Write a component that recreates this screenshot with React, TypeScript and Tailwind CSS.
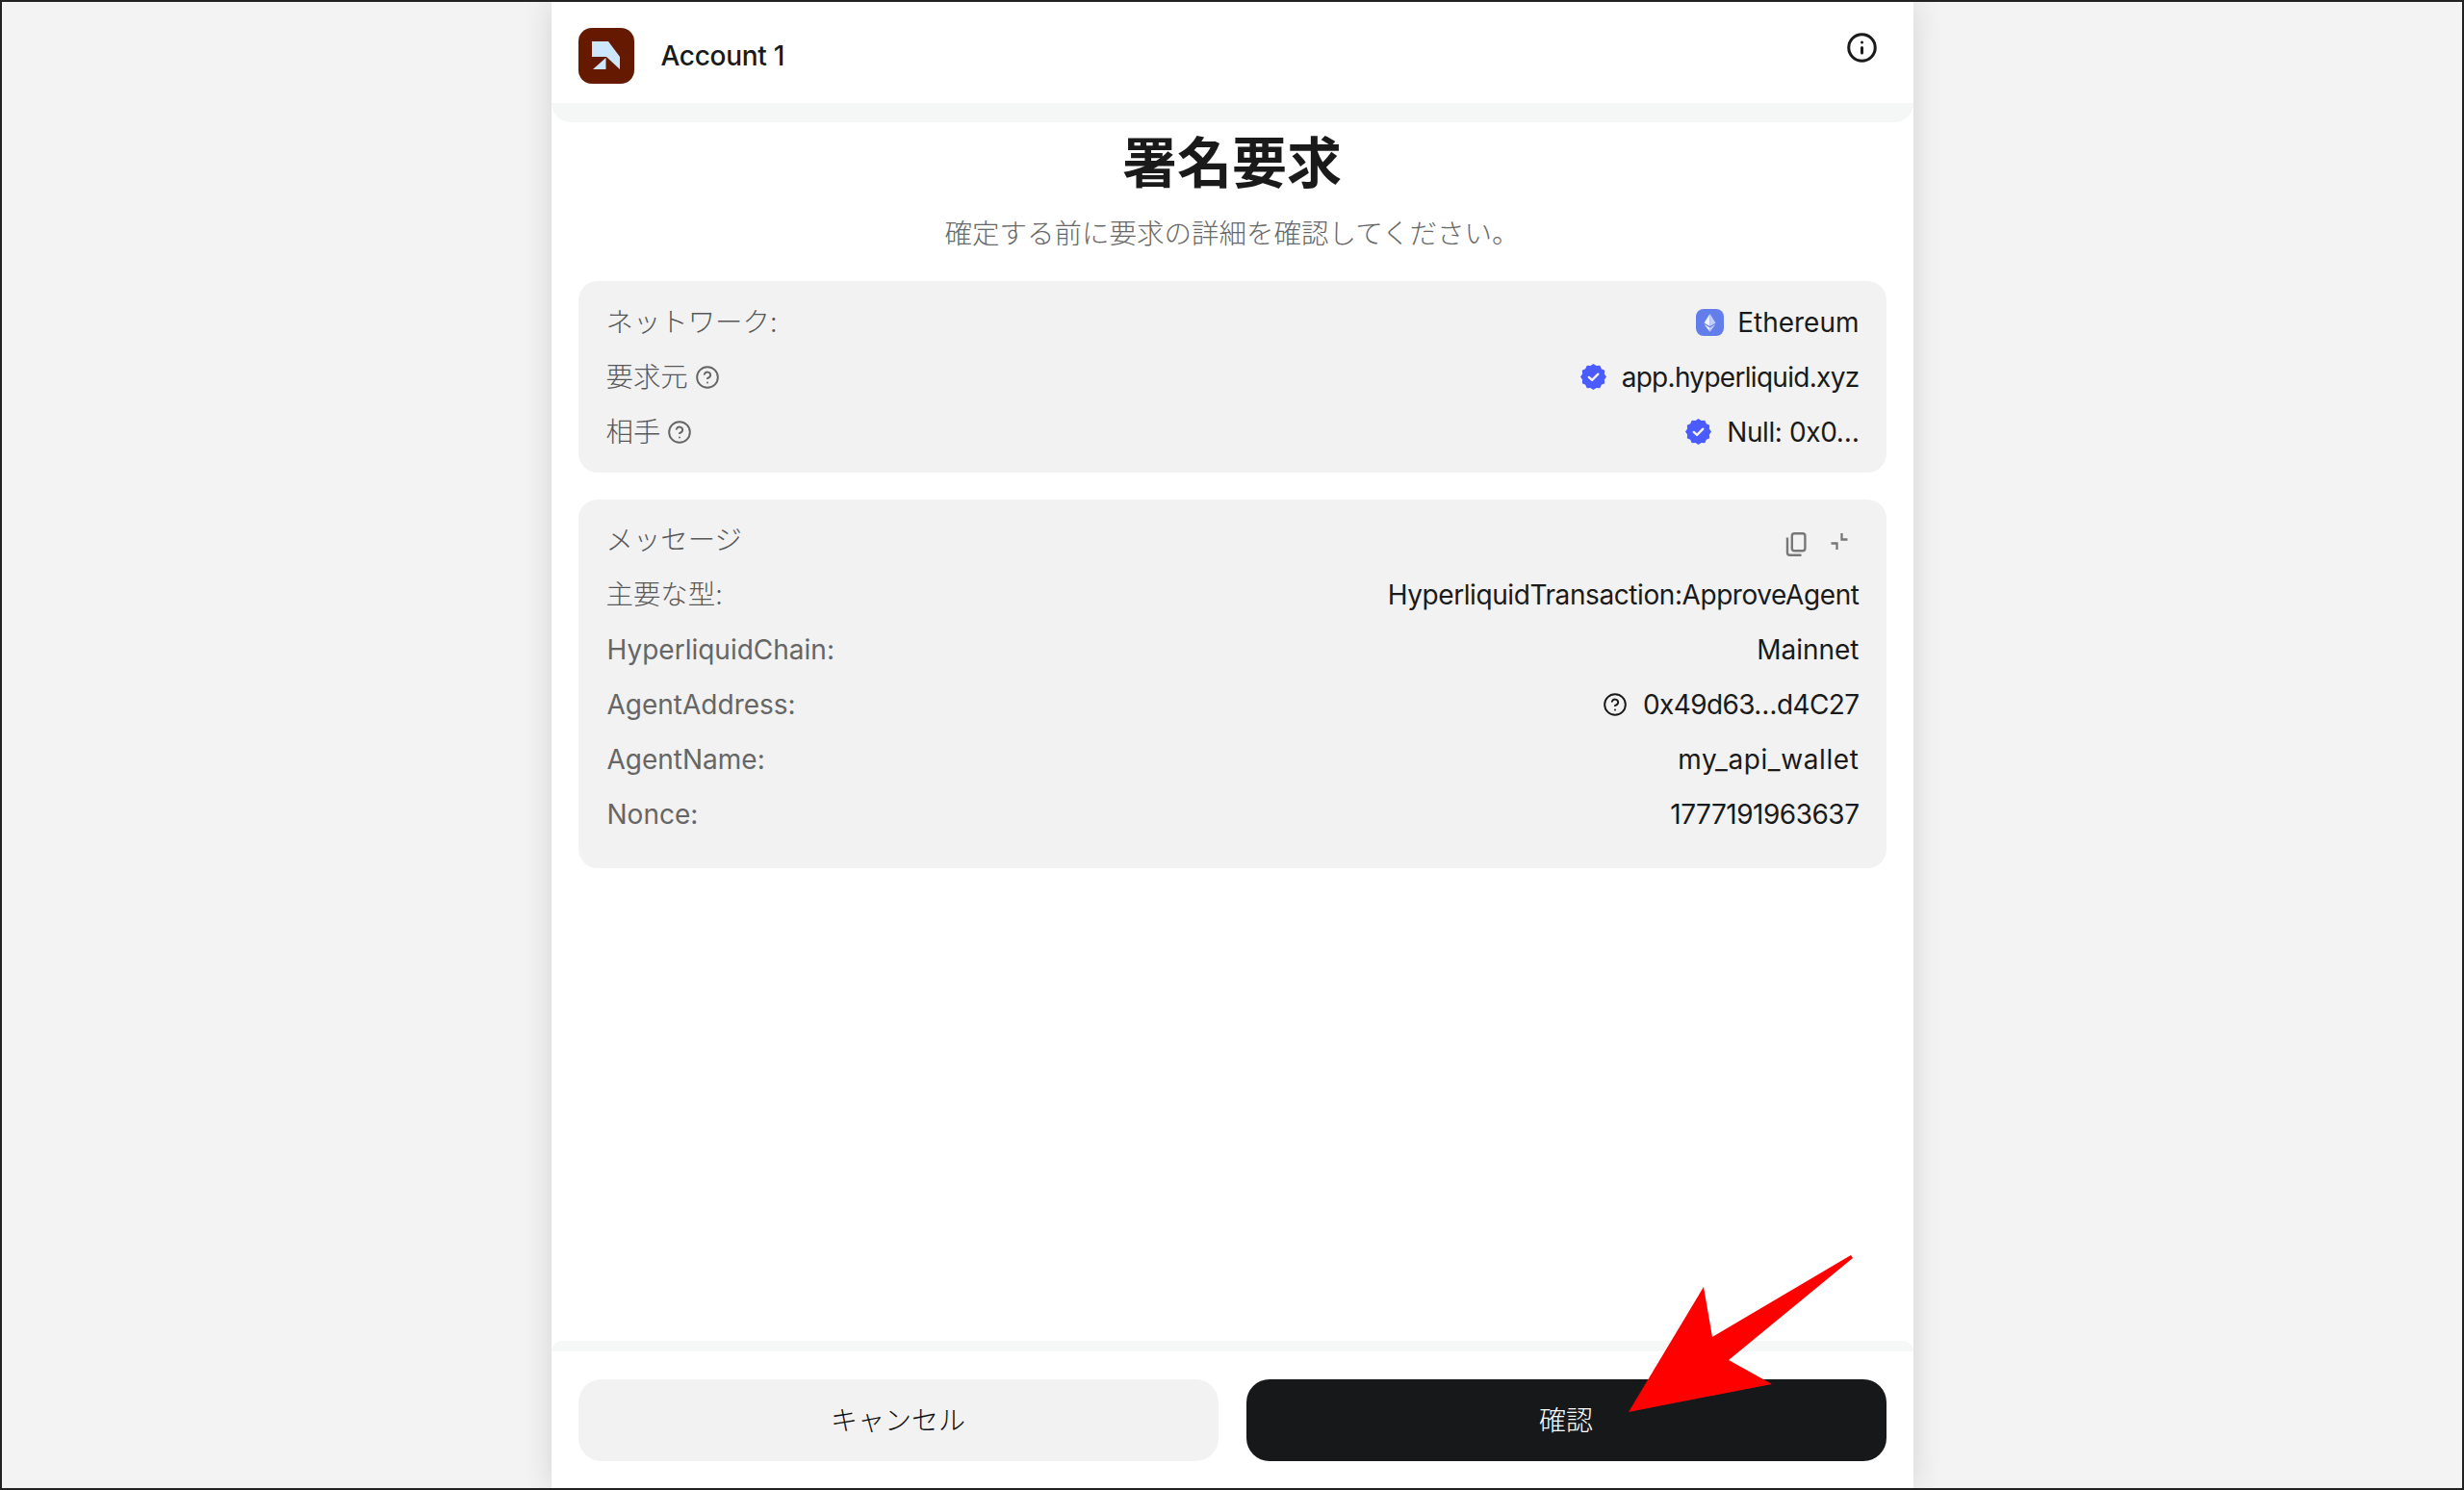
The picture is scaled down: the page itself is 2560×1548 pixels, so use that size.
import React from 'react'
import { CircleHelp, Info } from 'lucide-react'

const FONT = 'font-["Inter","Noto_Sans_CJK_JP",sans-serif]'

// scalloped badge outline, 24 points around the centre
const badgePoints = Array.from({ length: 24 }, (_, i) => {
  const r = i % 2 === 0 ? 13.5 : 11.8
  const a = (i / 24) * Math.PI * 2
  return `${13.5 + r * Math.sin(a)},${13.5 - r * Math.cos(a)}`
}).join(' ')

const VerifiedBadge = () => (
  <svg width="27" height="27" viewBox="0 0 27 27" className="shrink-0">
    <polygon points={badgePoints} fill="#4a5cff" />
    <path d="M8.8 13.9l3.3 3 6.2-6.2" fill="none" stroke="#f2f2f2" strokeWidth="2.4" strokeLinecap="round" strokeLinejoin="round" />
  </svg>
)

const EthIcon = () => (
  <svg width="29" height="28" viewBox="0 0 29 28" className="shrink-0">
    <rect width="29" height="28" rx="8" fill="#627eea" />
    <path d="M14.5 5l-6 9.6 6 3.4z" fill="#f0f3fd" />
    <path d="M14.5 5l6 9.6-6 3.4z" fill="#c3cef7" />
    <path d="M14.5 19.4l-6-3.6 6 8z" fill="#f0f3fd" />
    <path d="M14.5 19.4l6-3.6-6 8z" fill="#c3cef7" />
  </svg>
)

const LogoIcon = () => (
  <svg width="58" height="58" viewBox="0 0 58 58" className="shrink-0">
    <rect width="58" height="58" rx="14" fill="#651a00" />
    <path d="M14 14h17l12 16v13L29 30H14z" fill="#cce6fb" />
    <path d="M15 43l13.5-12v12z" fill="#cce6fb" />
  </svg>
)

const CopyIcon = () => (
  <svg width="22" height="25" viewBox="0 0 22 25" fill="none" stroke="#777777" strokeWidth="2.4" className="shrink-0">
    <rect x="6.8" y="1.2" width="13.6" height="18" rx="2.5" />
    <path d="M2 5.5v15.8a2.5 2.5 0 0 0 2.5 2.5h12" />
  </svg>
)

const CollapseIcon = () => (
  <svg width="18" height="19" viewBox="0 0 18 19" fill="none" stroke="#777777" strokeWidth="2.3" className="shrink-0">
    <path d="M11.5 1v6.5h6" />
    <path d="M0.5 11.5h6v6.5" />
  </svg>
)

const HelpIcon = ({ dark }: { dark?: boolean }) => (
  <CircleHelp size={26} strokeWidth={1.8} className={`shrink-0 ${dark ? 'text-[#1a1a1a]' : 'text-[#666666]'}`} />
)

const Row = ({ label, children }: { label: React.ReactNode; children?: React.ReactNode }) => (
  <div className="flex items-center justify-between h-[57px]">
    <div className="flex items-center gap-[7px] text-[#666666]">{label}</div>
    <div className="flex items-center text-[#1a1a1a]">{children}</div>
  </div>
)

const JaLabel = ({ children }: { children: React.ReactNode }) => (
  <span className="font-light text-[28.4px] text-[#585858] -ml-[1px]">{children}</span>
)

export default function App() {
  return (
    <div className={`${FONT} w-[2560px] h-[1548px] border-2 border-[#222222] bg-[#f3f3f3] flex justify-center overflow-hidden relative text-[28px] leading-[40px]`}>
      <div className="w-[1415px] h-full bg-white flex flex-col shadow-[0_0_30px_rgba(0,0,0,0.13)]">
        {/* Header */}
        <div className="h-[105px] flex items-center pt-[6px] pl-[28px] pr-[28px] shrink-0">
          <LogoIcon />
          <span className="ml-[28px] font-medium text-[#1a1a1a] tracking-[-0.3px]">Account 1</span>
          <Info size={33} strokeWidth={2.2} className="ml-auto mb-[16px] mr-[9px] text-[#1a1a1a]" />
        </div>
        <div className="h-[20px] shrink-0 bg-[#f5f6f6] rounded-b-[20px]" />

        {/* Title */}
        <div className="flex flex-col items-center">
          <h1 className="text-[57px] leading-[60px] font-bold text-[#1a1a1a] mt-[13px]">署名要求</h1>
          <p className="text-[28.5px] leading-[40px] font-light text-[#686868] mt-[23px]">確定する前に要求の詳細を確認してください。</p>
        </div>

        {/* Cards */}
        <div className="mx-[28px] mt-[29px] rounded-[20px] bg-[#f2f2f2] pl-[30px] pr-[28px] py-[14px]">
          <Row label={<JaLabel>ネットワーク:</JaLabel>}>
            <EthIcon />
            <span className="ml-[14px]">Ethereum</span>
          </Row>
          <Row label={<><JaLabel>要求元</JaLabel><HelpIcon /></>}>
            <VerifiedBadge />
            <span className="ml-[16px] tracking-[-0.7px]">app.hyperliquid.xyz</span>
          </Row>
          <Row label={<><JaLabel>相手</JaLabel><HelpIcon /></>}>
            <VerifiedBadge />
            <span className="ml-[16px] tracking-[-0.4px]">Null: 0x0…</span>
          </Row>
        </div>

        <div className="mx-[28px] mt-[28px] rounded-[20px] bg-[#f2f2f2] pl-[30px] pr-[28px] pt-[13px] pb-[28px]">
          <Row label={<JaLabel>メッセージ</JaLabel>}>
            <div className="flex items-start gap-[25px] mt-[10px] mr-[12px]">
              <CopyIcon />
              <CollapseIcon />
            </div>
          </Row>
          <Row label={<JaLabel>主要な型:</JaLabel>}>
            <span className="tracking-[-0.42px]">HyperliquidTransaction:ApproveAgent</span>
          </Row>
          <Row label="HyperliquidChain:">
            <span>Mainnet</span>
          </Row>
          <Row label="AgentAddress:">
            <HelpIcon dark />
            <span className="ml-[16px] tracking-[-0.6px]">0x49d63…d4C27</span>
          </Row>
          <Row label="AgentName:">
            <span className="tracking-[0.6px]">my_api_wallet</span>
          </Row>
          <Row label="Nonce:">
            <span className="tracking-[-0.5px]">1777191963637</span>
          </Row>
        </div>

        {/* Footer */}
        <div className="mt-auto shrink-0">
          <div className="h-[11px] bg-[#f6f7f7] rounded-t-[20px]" />
          <div className="flex gap-[29px] px-[28px] pt-[29px] pb-[28px]">
            <button className="flex-1 h-[85px] rounded-[24px] bg-[#f2f2f2] text-[#111111] font-light">キャンセル</button>
            <button className="flex-1 h-[85px] rounded-[24px] bg-[#16181a] text-white font-light">確認</button>
          </div>
        </div>
      </div>

      {/* Red annotation arrow laid over the page */}
      <svg className="absolute left-[-2px] top-[-2px] pointer-events-none" width="2560" height="1548" viewBox="0 0 2560 1548">
        <polygon points="1923,1304 1925,1307 1796,1413 1841,1438 1692,1467 1770,1337 1779,1389" fill="#ff0000" />
      </svg>
    </div>
  )
}
